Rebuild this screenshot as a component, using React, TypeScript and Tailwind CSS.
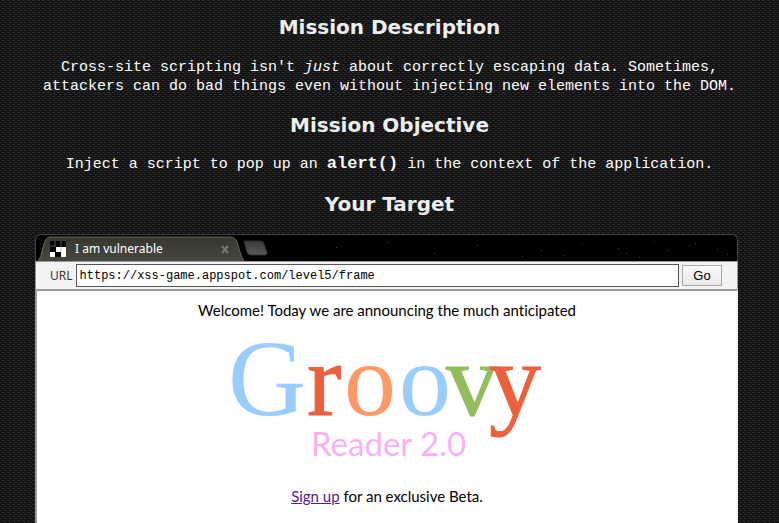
import React from "react";

const stars = [
  [300, 12], [352, 7], [398, 18], [441, 10], [486, 21], [505, 15], [528, 20], [546, 9],
  [582, 13], [590, 18], [603, 22], [618, 6], [632, 15], [659, 8], [681, 14], [691, 19],
];

function Heading({ children }: { children: React.ReactNode }) {
  return (
    <h2 className="font-['DejaVu_Sans',sans-serif] text-[20px] leading-6 font-bold text-[#eee]">
      {children}
    </h2>
  );
}

function TabStrip() {
  return (
    <div className="relative flex h-[27px] items-center overflow-hidden rounded-t-md border border-b-0 border-[#444] bg-black">
      <svg className="absolute inset-0 h-full w-full" aria-hidden="true">
        <defs>
          <linearGradient id="tab" x1="0" y1="0" x2="0" y2="1">
            <stop offset="0" stopColor="#36362f" />
            <stop offset="1" stopColor="#48483f" />
          </linearGradient>
          <linearGradient id="add" x1="0" y1="0" x2="0" y2="1">
            <stop offset="0" stopColor="#3a3a3a" />
            <stop offset="1" stopColor="#5a5a5a" />
          </linearGradient>
        </defs>
        {stars.map(([x, y]) => (
          <rect key={x} x={x} y={y} width="1" height="1" fill="#444" />
        ))}
        <path
          d="M0 27 C4 26 5 20 8 9 Q10 2 14 2 H194 Q199 2 201 7 C204 16 205 23 209 27Z"
          fill="url(#tab)"
          stroke="#67675f"
        />
        <path
          d="M208 6 H224 Q227 6 228 9 L231 18 Q231 20 229 20 H215 Q212 20 211 17Z"
          fill="url(#add)"
          stroke="#333"
        />
        <rect x="14" y="6" width="16" height="16" fill="#000" />
        <path d="M19 6v6M25 6v6M14 11h5" stroke="#555" strokeWidth="1" />
        <path d="M20 12h10v5h-10z M14 17h5v5h-5z M25 17h5v5h-5z" fill="#fff" />
        <path d="M25 12v5" stroke="#ccc" strokeWidth="1" />
        <path d="M186 11l6 7M192 11l-6 7" stroke="#77776f" strokeWidth="2" />
      </svg>
      <span className="relative mt-px ml-[39px] font-['Noto_Sans',sans-serif] text-[12px] leading-4 text-white">
        I am vulnerable
      </span>
    </div>
  );
}

function Logo() {
  return (
    <svg
      viewBox="0 0 320 140"
      className="mx-auto mt-[6px] h-[140px] w-[320px] overflow-visible font-['Liberation_Serif',serif] text-[104px]"
    >
      <text x="1" y="89" className="text-[108px]" fill="#99ccff">G</text>
      <text x="80" y="89" fill="#eb613d" stroke="#eb613d">r</text>
      <text x="117" y="89" fill="#ff9966">o</text>
      <text x="172" y="89" fill="#99ccff">o</text>
      <text x="219" y="89" fill="#93bd5c" stroke="#93bd5c">v</text>
      <text x="262" y="89" fill="#eb613d" stroke="#eb613d">y</text>
      <text x="84" y="130" className="font-['Lato',sans-serif] text-[33px]" fill="#fab0f5">
        Reader 2.0
      </text>
    </svg>
  );
}

export default function App() {
  return (
    <div className="h-screen overflow-hidden bg-[#111] bg-[image:conic-gradient(from_90deg_at_2px_1px,transparent_75%,#2b2b2b_0),conic-gradient(from_90deg_at_2px_1px,transparent_75%,#2b2b2b_0)] bg-[length:5px_4px] bg-[position:0_0,2px_2px] px-[35px] pt-[15px]">
      <div className="flex flex-col text-center font-['Liberation_Mono',monospace] text-[15px] leading-[19px] text-white">
        <Heading>Mission Description</Heading>
        <p className="mt-[19px]">
          Cross-site scripting isn't <em>just</em> about correctly escaping data. Sometimes,
          <br />
          attackers can do bad things even without injecting new elements into the DOM.
        </p>
        <div className="mt-[17px]">
          <Heading>Mission Objective</Heading>
        </div>
        <p className="mt-[18px]">
          Inject a script to pop up an{" "}
          <code className="text-[17px] leading-4 font-bold">alert()</code> in the context of the
          application.
        </p>
        <div className="mt-[18px]">
          <Heading>Your Target</Heading>
        </div>
      </div>

      <main className="mt-[18px] mr-[6px]">
        <TabStrip />
        <form
          className="flex h-[28px] items-center border border-b-0 border-[#999] bg-[#f3f3f3] pr-[15px] pl-[14px]"
          onSubmit={(e) => e.preventDefault()}
        >
          <label htmlFor="url" className="mr-[3px] font-['Noto_Sans',sans-serif] text-[12px] text-[#333]">
            URL
          </label>
          <input
            id="url"
            defaultValue="https://xss-game.appspot.com/level5/frame"
            className="h-[23px] min-w-0 flex-1 border border-[#555] bg-white px-[3px] font-['Liberation_Mono',monospace] text-[12px] text-black outline-none"
          />
          <button className="ml-[3px] h-[21px] w-10 border border-[#aaa] bg-linear-to-b from-[#fafafa] to-[#e8e8e8] font-['Liberation_Sans',sans-serif] text-[13px] leading-4 text-black">
            Go
          </button>
        </form>
        <section className="h-[400px] border-2 border-r border-[#999] border-r-[#eee] bg-white pt-[9px] text-center font-['Lato',sans-serif] text-[15px] leading-5 text-black [font-variant-ligatures:none]">
          <p>Welcome! Today we are announcing the much anticipated</p>
          <Logo />
          <p className="mt-5">
            <a href="#signup" className="text-[#551a8b] underline">
              Sign up
            </a>{" "}
            for an exclusive Beta.
          </p>
        </section>
      </main>
    </div>
  );
}
